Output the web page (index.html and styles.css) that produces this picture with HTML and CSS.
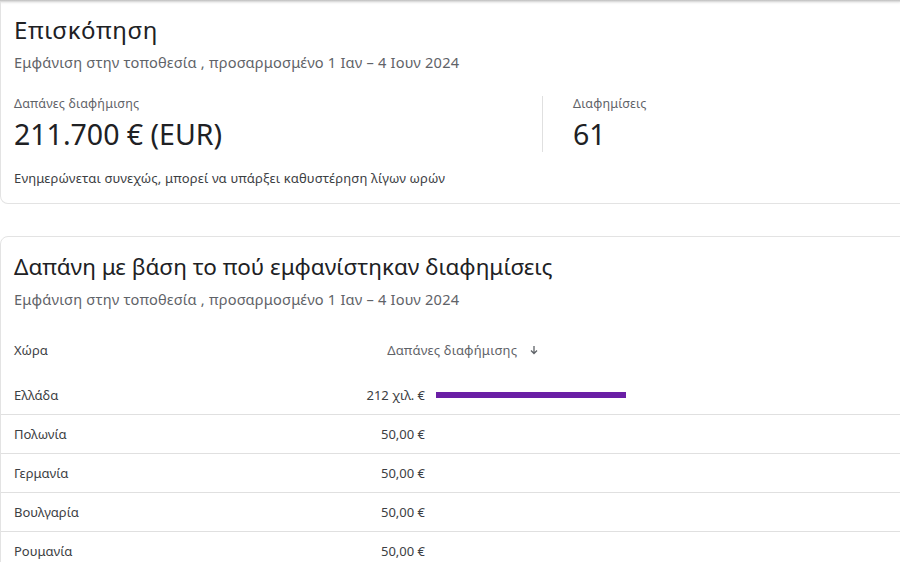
FILE: index.html
```html
<!doctype html>
<html lang="el">
  <head>
    <meta charset="utf-8">
    <title>Επισκόπηση</title>
    <link rel="stylesheet" href="styles.css">
  </head>
  <body>
    <div class="topbar"></div>
    <section class="card overview">
      <h1>Επισκόπηση</h1>
      <p class="sub">Εμφάνιση στην τοποθεσία , προσαρμοσμένο 1 Ιαν – 4 Ιουν 2024</p>
      <div class="stats">
        <div class="stat spend">
          <div class="stat-label">Δαπάνες διαφήμισης</div>
          <div class="stat-value">211.700 € (EUR)</div>
        </div>
        <div class="stat ads">
          <div class="stat-label">Διαφημίσεις</div>
          <div class="stat-value">61</div>
        </div>
      </div>
      <p class="note">Ενημερώνεται συνεχώς, μπορεί να υπάρξει καθυστέρηση λίγων ωρών</p>
    </section>

    <section class="card locations">
      <h2>Δαπάνη με βάση το πού εμφανίστηκαν διαφημίσεις</h2>
      <p class="sub">Εμφάνιση στην τοποθεσία , προσαρμοσμένο 1 Ιαν – 4 Ιουν 2024</p>
      <div class="table">
        <div class="row head">
          <div class="col-country">Χώρα</div>
          <div class="col-spend-head">Δαπάνες διαφήμισης
            <svg class="sort" width="10" height="10" viewBox="0 0 10 10"><path d="M5 1v7M2 5.5l3 3 3-3" fill="none" stroke="#5f6368" stroke-width="1.3"/></svg>
          </div>
        </div>
        <div class="row">
          <div class="col-country">Ελλάδα</div>
          <div class="col-spend"><span class="amount">212 χιλ. €</span><span class="bar" style="width:190px"></span></div>
        </div>
        <div class="row">
          <div class="col-country">Πολωνία</div>
          <div class="col-spend"><span class="amount">50,00 €</span></div>
        </div>
        <div class="row">
          <div class="col-country">Γερμανία</div>
          <div class="col-spend"><span class="amount">50,00 €</span></div>
        </div>
        <div class="row">
          <div class="col-country">Βουλγαρία</div>
          <div class="col-spend"><span class="amount">50,00 €</span></div>
        </div>
        <div class="row">
          <div class="col-country">Ρουμανία</div>
          <div class="col-spend"><span class="amount">50,00 €</span></div>
        </div>
      </div>
    </section>
  </body>
</html>
```

FILE: styles.css
```css
html, body {
  overflow: hidden;
}
body {
  margin: 0;
  background: #fff;
  font-family: "Noto Sans", sans-serif;
  color: #202124;
}
.topbar {
  height: 2px;
  background: linear-gradient(#bdbdbd, #e6e6e6);
  box-shadow: 0 1px 2px rgba(0,0,0,0.1);
}
.card {
  border: 1px solid #e3e3e3;
  border-radius: 8px;
  margin-right: -16px;
  padding-left: 13px;
}
.overview {
  border-top: none;
  border-top-left-radius: 0;
  padding-top: 14px;
  padding-bottom: 16px;
}
h1, h2 {
  margin: 0;
  font-weight: 400;
  line-height: 28px;
}
h1 {
  font-size: 24px;
  letter-spacing: 0.6px;
}
h2 {
  font-size: 22.5px;
}
.sub {
  margin: 8px 0 0;
  font-size: 14.6px;
  line-height: 20px;
  color: #5f6368;
  letter-spacing: 0.2px;
}
.stats {
  display: flex;
  margin-top: 24px;
}
.stat {
  display: flex;
  flex-direction: column;
  gap: 4px;
}
.spend {
  width: 528px;
  border-right: 1px solid #e0e0e0;
}
.ads {
  padding-left: 30px;
}
.stat-label {
  font-size: 12.5px;
  line-height: 16px;
  color: #5f6368;
  letter-spacing: 0.2px;
}
.stat-value {
  font-size: 28.5px;
  line-height: 36px;
}
.note {
  margin: 17px 0 0;
  font-size: 13px;
  line-height: 18px;
  color: #3c4043;
  letter-spacing: 0.15px;
}
.locations {
  margin-top: 32px;
  padding-top: 16px;
  padding-left: 0;
}
.locations h2, .locations .sub {
  padding-left: 13px;
}
.table {
  margin-top: 23px;
  font-size: 13px;
  color: #3c4043;
}
.row {
  display: flex;
  align-items: center;
  height: 38px;
  padding-left: 13px;
  border-bottom: 1px solid #e0e0e0;
}
.row.head {
  height: 36px;
  margin-bottom: 8px;
  border-bottom: none;
}
.col-country {
  width: 286px;
}
.col-spend-head {
  width: 326px;
  text-align: center;
  color: #5f6368;
  letter-spacing: 0.2px;
}
.sort {
  margin-left: 8px;
}
.col-spend {
  display: flex;
  align-items: center;
}
.amount {
  width: 125px;
  text-align: right;
}
.bar {
  height: 6px;
  margin-left: 11px;
  background: #6a1fa5;
}
```
